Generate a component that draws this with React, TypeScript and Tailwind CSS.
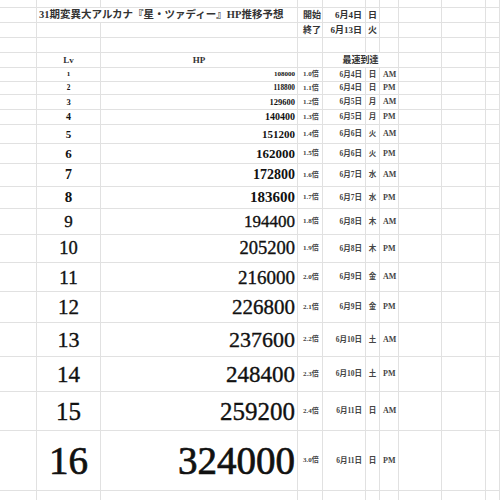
import React from "react";
import clsx from "clsx";

const W = [
  "w-[37px]",
  "w-[64px]",
  "w-[197px]",
  "w-[25px]",
  "w-[43px]",
  "w-[14px]",
  "w-[19px]",
  "w-[43px]",
  "w-[44px]",
];

type Row = {
  lv: number;
  hp: number;
  rate: string;
  date: string;
  day: string;
  ampm: string;
  h: string;
  size: string;
  weight: string;
};

const thin = "[-webkit-text-stroke:0.35px_#111]";

const rows: Row[] = [
  { lv: 1, hp: 108000, rate: "1.0", date: "6月4日", day: "日", ampm: "AM", h: "h-[14px]", size: "text-[7px]", weight: "font-bold" },
  { lv: 2, hp: 118800, rate: "1.1", date: "6月4日", day: "日", ampm: "PM", h: "h-[13px]", size: "text-[7.3px]", weight: "font-bold" },
  { lv: 3, hp: 129600, rate: "1.2", date: "6月5日", day: "月", ampm: "AM", h: "h-[15px]", size: "text-[8.5px]", weight: "font-bold" },
  { lv: 4, hp: 140400, rate: "1.3", date: "6月5日", day: "月", ampm: "PM", h: "h-[15px]", size: "text-[10px]", weight: "font-bold" },
  { lv: 5, hp: 151200, rate: "1.4", date: "6月6日", day: "火", ampm: "AM", h: "h-[19px]", size: "text-[11px]", weight: "font-bold" },
  { lv: 6, hp: 162000, rate: "1.5", date: "6月6日", day: "火", ampm: "PM", h: "h-[20px]", size: "text-[13px]", weight: "font-bold" },
  { lv: 7, hp: 172800, rate: "1.6", date: "6月7日", day: "水", ampm: "AM", h: "h-[23px]", size: "text-[14px]", weight: "font-bold" },
  { lv: 8, hp: 183600, rate: "1.7", date: "6月7日", day: "水", ampm: "PM", h: "h-[22px]", size: "text-[15px]", weight: "font-bold" },
  { lv: 9, hp: 194400, rate: "1.8", date: "6月8日", day: "木", ampm: "AM", h: "h-[26px]", size: "text-[17px]", weight: thin },
  { lv: 10, hp: 205200, rate: "1.9", date: "6月8日", day: "木", ampm: "PM", h: "h-[28px]", size: "text-[18.5px]", weight: thin },
  { lv: 11, hp: 216000, rate: "2.0", date: "6月9日", day: "金", ampm: "AM", h: "h-[29px]", size: "text-[19px]", weight: thin },
  { lv: 12, hp: 226800, rate: "2.1", date: "6月9日", day: "金", ampm: "PM", h: "h-[31px]", size: "text-[21px]", weight: thin },
  { lv: 13, hp: 237600, rate: "2.2", date: "6月10日", day: "土", ampm: "AM", h: "h-[34px]", size: "text-[22px]", weight: thin },
  { lv: 14, hp: 248400, rate: "2.3", date: "6月10日", day: "土", ampm: "PM", h: "h-[35px]", size: "text-[23px]", weight: thin },
  { lv: 15, hp: 259200, rate: "2.4", date: "6月11日", day: "日", ampm: "AM", h: "h-[39px]", size: "text-[25px]", weight: thin },
  { lv: 16, hp: 324000, rate: "3.0", date: "6月11日", day: "日", ampm: "PM", h: "h-[60px]", size: "text-[39px]", weight: "[-webkit-text-stroke:0.7px_#111]" },
];

function Cell({
  w,
  className,
  children,
}: {
  w: string;
  className?: string;
  children?: React.ReactNode;
}) {
  return (
    <div
      className={clsx(
        "flex shrink-0 items-center whitespace-nowrap border-r border-b border-[#e1e1e1] leading-none",
        w,
        className
      )}
    >
      {children}
    </div>
  );
}

function Tail() {
  return (
    <>
      <Cell w={W[6]} />
      <Cell w={W[7]} />
      <Cell w={W[8]} />
      <Cell w="flex-1" />
    </>
  );
}

export default function App() {
  return (
    <div
      className="w-[500px] h-[500px] overflow-hidden bg-white text-[#111]"
      style={{ fontFamily: '"Liberation Serif", "Noto Sans CJK JP", serif' }}
    >
      {/* partial top row */}
      <div className="flex h-[8px]">
        {W.map((w) => (
          <Cell key={w} w={w} />
        ))}
        <Cell w="flex-1" />
      </div>

      <div className="flex h-[15px] text-[9px] font-bold text-[#333]">
        <Cell w={W[0]} />
        <Cell w="w-[261px]" className="pl-[2px] text-[10.5px]">
          31期変異大アルカナ『星・ツァディー』HP推移予想
        </Cell>
        <Cell w={W[3]} className="pl-[5px]">開始</Cell>
        <Cell w={W[4]} className="justify-end pr-[3px]">6月4日</Cell>
        <Cell w={W[5]} className="justify-center">日</Cell>
        <Tail />
      </div>

      <div className="flex h-[15px] text-[9px] font-bold text-[#333]">
        <Cell w={W[0]} />
        <Cell w={W[1]} />
        <Cell w={W[2]} />
        <Cell w={W[3]} className="pl-[5px]">終了</Cell>
        <Cell w={W[4]} className="justify-end pr-[3px]">6月13日</Cell>
        <Cell w={W[5]} className="justify-center">火</Cell>
        <Tail />
      </div>

      <div className="flex h-[15px]">
        {W.map((w) => (
          <Cell key={w} w={w} />
        ))}
        <Cell w="flex-1" />
      </div>

      <div className="flex h-[15px] text-[9px] font-bold text-[#333]">
        <Cell w={W[0]} />
        <Cell w={W[1]} className="justify-center">Lv</Cell>
        <Cell w={W[2]} className="justify-center">HP</Cell>
        <Cell w={W[3]} />
        <Cell w="w-[76px]" className="justify-center">最速到達</Cell>
        <Cell w={W[7]} />
        <Cell w={W[8]} />
        <Cell w="flex-1" />
      </div>

      {rows.map((r) => (
        <div key={r.lv} className={clsx("flex", r.h)}>
          <Cell w={W[0]} />
          <Cell w={W[1]} className={clsx("justify-center", r.size, r.weight)}>
            {r.lv}
          </Cell>
          <Cell w={W[2]} className={clsx("justify-end pr-[2px]", r.size, r.weight)}>
            {r.hp}
          </Cell>
          <Cell w={W[3]} className="pl-[5px] text-[7px] font-bold text-[#444]">
            {r.rate}倍
          </Cell>
          <Cell w={W[4]} className="justify-end pr-[3px] text-[7.5px] font-bold text-[#444]">
            {r.date}
          </Cell>
          <Cell w={W[5]} className="justify-center text-[7.5px] font-bold text-[#444]">
            {r.day}
          </Cell>
          <Cell w={W[6]} className="pl-[3px] text-[8px] font-bold text-[#444]">
            {r.ampm}
          </Cell>
          <Cell w={W[7]} />
          <Cell w={W[8]} />
          <Cell w="flex-1" />
        </div>
      ))}

      <div className="flex h-[20px]">
        {W.map((w) => (
          <Cell key={w} w={w} />
        ))}
        <Cell w="flex-1" />
      </div>
    </div>
  );
}
